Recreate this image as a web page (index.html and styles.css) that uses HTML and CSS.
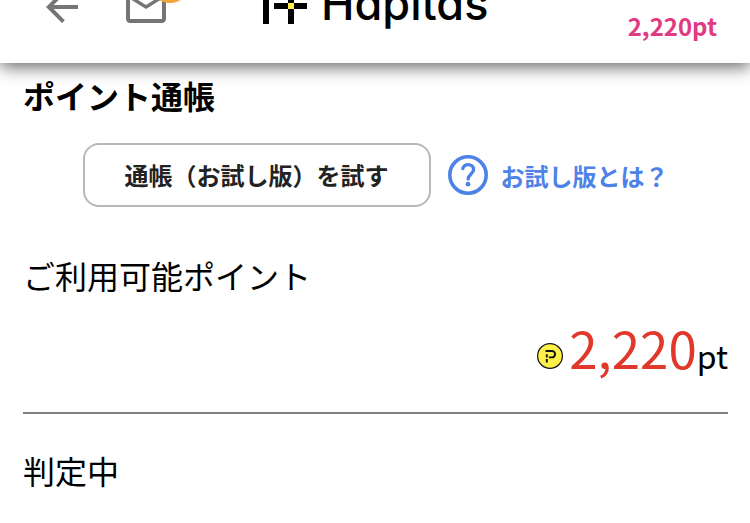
FILE: index.html
```html
<!DOCTYPE html>
<html lang="ja">
<head>
  <meta charset="UTF-8">
  <meta name="viewport" content="width=device-width, initial-scale=1">
  <title>ポイント通帳</title>
  <link rel="stylesheet" href="styles.css">
</head>
<body>
  <header class="header">
    <a class="icon-link" href="#" aria-label="戻る">
      <svg width="48" height="48" viewBox="0 0 24 24" fill="#757575"><path d="M20 11H7.83l5.59-5.59L12 4l-8 8 8 8 1.41-1.41L7.83 13H20v-2z"/></svg>
    </a>
    <a class="icon-link mail" href="#" aria-label="お知らせ">
      <svg width="48" height="48" viewBox="0 0 24 24" fill="#757575"><path d="M22 6c0-1.1-.9-2-2-2H4c-1.1 0-2 .9-2 2v12c0 1.1.9 2 2 2h16c1.1 0 2-.9 2-2V6zm-2 0l-8 5-8-5h16zm0 12H4V8l8 5 8-5v10z"/></svg>
      <span class="badge"></span>
    </a>
    <a class="logo" href="#">
      <svg width="46" height="48" viewBox="0 0 46 48">
        <path d="M1 0h6v48H1zM12 27h33v6H12zM26 6h6v42h-6z"/>
        <path fill="#fff04a" d="M26 27h6v6h-6z"/>
      </svg>
      <span class="logo-name">Hapitas</span>
    </a>
    <span class="header-point">2,220pt</span>
  </header>

  <main class="content">
    <h1>ポイント通帳</h1>

    <div class="trial">
      <button class="trial-button" type="button">通帳（お試し版）を試す</button>
      <a class="trial-help" href="#">
        <svg width="40" height="40" viewBox="0 0 40 40" fill="none" stroke="#4d82e8">
          <circle cx="20" cy="20" r="18.2" stroke-width="3.6"/>
          <path stroke-width="3.4" stroke-linecap="round" d="M14.8 13.6c.8-2.6 2.8-4 5.3-4 3.2 0 5.5 2 5.5 5 0 4.2-5.5 5-5.5 9.4"/>
          <circle cx="20" cy="29.2" r="2.4" fill="#4d82e8" stroke="none"/>
        </svg>
        お試し版とは？
      </a>
    </div>

    <section class="balance">
      <h2>ご利用可能ポイント</h2>
      <p class="amount">
        <svg class="coin" width="26" height="26" viewBox="0 0 26 26" fill="none" stroke="#111">
          <circle cx="13" cy="13" r="12.4" fill="#fff04a" stroke-width="1.2"/>
          <path stroke-width="1.9" d="M8.5 8h6.4a3.2 3.2 0 0 1 0 6.4h-3M9.8 11.2v3.2M9.8 16v3.4"/>
        </svg>
        <span class="amount-number">2,220</span><span class="amount-unit">pt</span>
      </p>
    </section>

    <section class="pending">
      <h2>判定中</h2>
    </section>
  </main>
</body>
</html>
```
FILE: styles.css
```css
* {
  box-sizing: border-box;
}

body {
  margin: 0;
  background-color: #fff;
  color: #000;
  font-family: "Noto Sans CJK JP", sans-serif;
}

svg {
  display: block;
  flex-shrink: 0;
}

/* Header */
.header {
  display: flex;
  align-items: flex-end;
  height: 63px;
  padding: 0 33px 25px 38px;
  overflow: hidden;
  box-shadow: 0 4px 16px rgba(0, 0, 0, 0.6);
}

.icon-link {
  margin: 0 36px 7px 0;
}

.mail {
  position: relative;
  margin-right: 92px;
}

.badge {
  position: absolute;
  right: -20px;
  bottom: 28px;
  width: 40px;
  height: 40px;
  border-radius: 50%;
  background-color: #f0a63c;
}

.logo {
  display: flex;
  align-items: flex-end;
  gap: 13px;
  margin-bottom: 14px;
  color: #000;
  text-decoration: none;
}

.logo-name {
  font-family: Inter, sans-serif;
  font-size: 45px;
  font-weight: 500;
  line-height: 40px;
  font-feature-settings: "cv11";
}

.header-point {
  margin-left: auto;
  color: #e23a82;
  font-size: 24px;
  font-weight: bold;
  line-height: 24px;
}

/* Passbook */
.content {
  padding: 8px 22px 8px 23px;
}

h1,
h2 {
  margin: 0;
  font-size: 32px;
  line-height: 48px;
}

h2 {
  font-weight: normal;
}

.trial {
  display: flex;
  justify-content: center;
  align-items: center;
  gap: 17px;
  margin: 24px 0 44px;
}

.trial-button {
  height: 64px;
  padding: 0 40px 2px;
  border: 2px solid #b8b8b8;
  border-radius: 16px;
  background-color: #fff;
  color: #222;
  font-family: inherit;
  font-size: 24px;
  font-weight: bold;
  white-space: nowrap;
}

.trial-help {
  display: flex;
  align-items: center;
  gap: 13px;
  color: #4d82e8;
  font-size: 24px;
  font-weight: bold;
  text-decoration: none;
  white-space: nowrap;
}

.balance {
  padding-bottom: 25px;
  border-bottom: 2px solid #808080;
}

.amount {
  display: flex;
  justify-content: flex-end;
  align-items: baseline;
  margin: 16px 0 0;
  line-height: 64px;
}

.coin {
  margin-right: 6px;
}

.amount-number {
  color: #e0382b;
  font-size: 51px;
}

.amount-unit {
  font-size: 32px;
}

.pending {
  padding-top: 32px;
}
```
